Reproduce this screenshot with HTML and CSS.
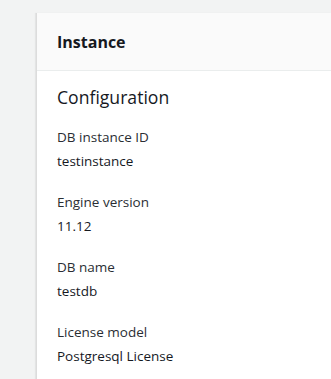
FILE: index.html
```html
<!DOCTYPE html>
<html>
<head>
<meta charset="utf-8">
<link rel="stylesheet" href="styles.css">
</head>
<body>
<div class="card">
  <div class="card-header"><h2>Instance</h2></div>
  <div class="card-body">
    <h3>Configuration</h3>
    <dl>
      <div class="item"><dt>DB instance ID</dt><dd>testinstance</dd></div>
      <div class="item"><dt>Engine version</dt><dd>11.12</dd></div>
      <div class="item"><dt>DB name</dt><dd>testdb</dd></div>
      <div class="item"><dt>License model</dt><dd>Postgresql License</dd></div>
    </dl>
  </div>
</div>
</body>
</html>
```
FILE: styles.css
```css
html, body { margin: 0; padding: 0; }
body {
  background: #f2f3f3;
  font-family: "Open Sans", "Noto Sans", sans-serif;
  color: #16191f;
  padding: 13px 0 0 36px;
  height: 379px;
  box-sizing: border-box;
  overflow: hidden;
}
.card {
  background: #fff;
  border-left: 1px solid #dcdcdc;
  box-shadow: -1px 0 1px rgba(0,0,0,0.06);
  height: 366px;
}
.card-header {
  background: #fafafa;
  border-bottom: 1px solid #eaeded;
  height: 57px;
  display: flex;
  align-items: center;
  padding-left: 20px;
}
.card-header h2 {
  margin: 0;
  font-size: 16px;
  font-weight: 700;
  color: #16191f;
}
.card-body { padding: 14px 20px 0 20px; }
.card-body h3 {
  margin: 0 0 16px 0;
  font-size: 17.6px;
  font-weight: 400;
  line-height: 24px;
}
dl { margin: 0; }
.item { margin-bottom: 17px; }
dt, dd {
  margin: 0;
  font-size: 13.5px;
  line-height: 24px;
  color: #16191f;
}
dt { color: #2a2e33; }
```
